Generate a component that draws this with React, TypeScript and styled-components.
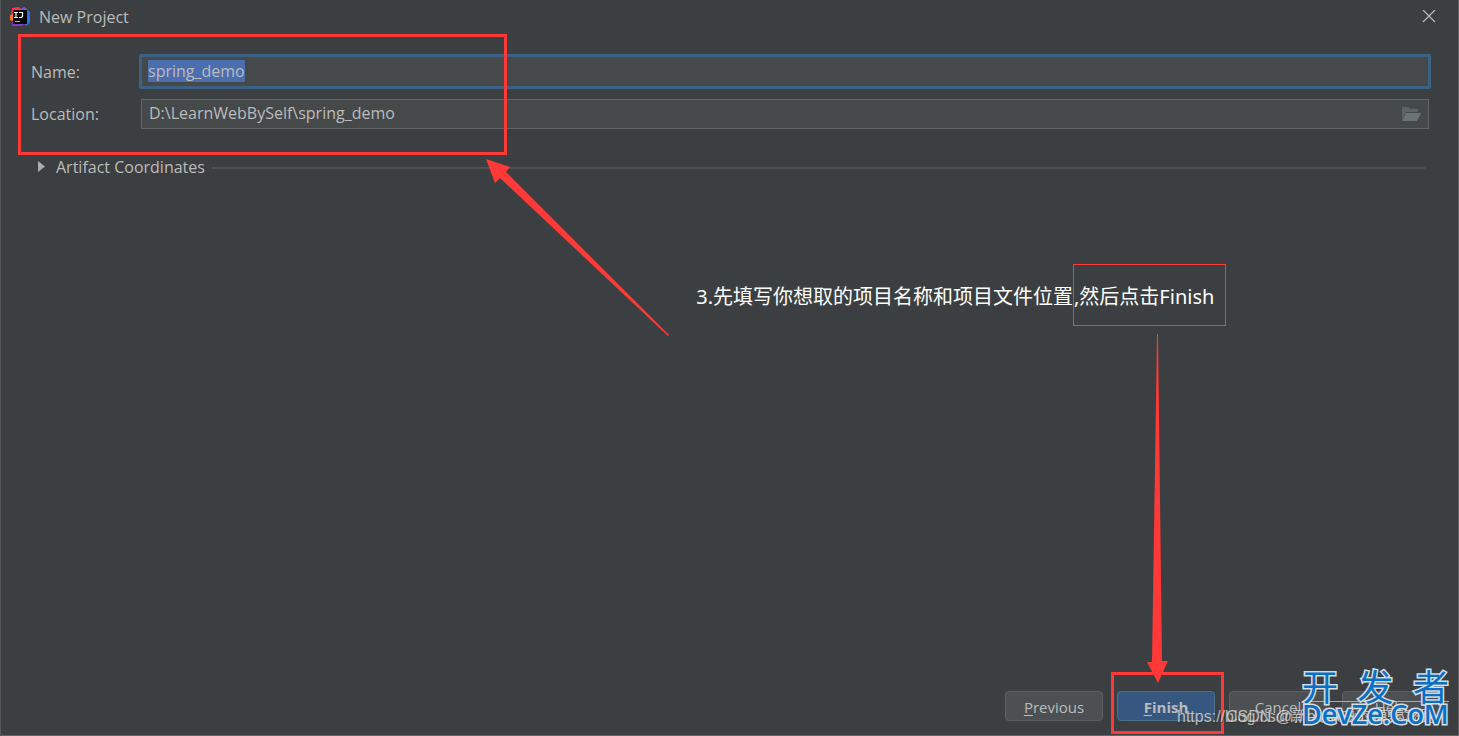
import React, { useEffect, useRef } from "react";
import styled, { createGlobalStyle } from "styled-components";

const uiFont = '"Open Sans", "Noto Sans CJK SC", sans-serif';
const red = "#ff3838";

const GlobalStyle = createGlobalStyle`
  *, *::before, *::after { box-sizing: border-box; }
  body { margin: 0; background: #3c3f41; }
`;

const Dialog = styled.main`
  position: relative;
  display: flex;
  flex-direction: column;
  min-height: 100vh;
  overflow: hidden;
  background: #3c3f41;
  border: 1px solid #626466;
  border-top: 0;
  border-left-color: #55585a;
  color: #bbbbbb;
  font: 16px/20px ${uiFont};
`;

const TitleBar = styled.header`
  display: flex;
  align-items: center;
  height: 34px;
  padding: 0 22px 0 8px;
`;

const Title = styled.h1`
  flex: 1;
  margin: 0 0 0 7px;
  font-size: 16px;
  font-weight: 400;
  line-height: 20px;
`;

const CloseButton = styled.button`
  display: flex;
  width: 14px;
  height: 14px;
  padding: 0;
  border: 0;
  background: none;
`;

const Fields = styled.section`
  position: relative;
  display: grid;
  gap: 10px;
  padding: 20px 27px 26px 30px;
`;

const Field = styled.div`
  display: grid;
  grid-template-columns: 108px 1fr;
  align-items: center;
`;

const FieldLabel = styled.label`
  line-height: 20px;
`;

const FocusedInput = styled.input`
  width: 100%;
  height: 35px;
  padding: 0 6px 2px;
  border: 3px solid #3d6185;
  border-radius: 2px;
  outline: 0;
  background: #45494a;
  color: #bbbbbb;
  font: 16px/20px ${uiFont};
  &::selection { background: #4b6eaf; color: #bbbbbb; }
`;

const PathBox = styled.div`
  display: flex;
  align-items: center;
  height: 30px;
  margin: 0 2px;
  padding-right: 7px;
  border: 1px solid #646464;
  background: #45494a;
`;

const PathInput = styled.input`
  flex: 1;
  min-width: 0;
  height: 28px;
  padding: 0 7px 2px;
  border: 0;
  outline: 0;
  background: none;
  color: #bbbbbb;
  font: 16px/20px ${uiFont};
`;

const BrowseButton = styled.button`
  display: flex;
  padding: 0;
  border: 0;
  background: none;
`;

const Artifact = styled.section`
  display: flex;
  align-items: center;
  gap: 7px;
  margin-top: 2px;
  padding: 0 33px 0 36px;
  &::after {
    content: "";
    flex: 1;
    height: 2px;
    margin-top: 2px;
    background: #515151;
  }
`;

const ArtifactToggle = styled.button`
  display: flex;
  align-items: center;
  gap: 10px;
  padding: 0;
  border: 0;
  background: none;
  color: #bbbbbb;
  font: 16px/20px ${uiFont};
`;

const Footer = styled.footer`
  display: flex;
  justify-content: flex-end;
  gap: 15px;
  margin-top: auto;
  padding: 0 18px 14px;
`;

const ActionButton = styled.button<{ $primary?: boolean }>`
  width: 98px;
  height: 30px;
  padding: 2px 0 0;
  border: 1px solid ${(p) => (p.$primary ? "#4c708c" : "#5e6060")};
  border-radius: 4px;
  background: ${(p) => (p.$primary ? "#365880" : "#4c5052")};
  color: #bbbbbb;
  font: ${(p) => (p.$primary ? 700 : 400)} 15px/20px ${uiFont};
  & u { text-underline-offset: 2px; }
`;

const Marked = styled.div`
  position: relative;
  margin: 0 -1px 0 -1px;
`;

const FieldsMark = styled.div`
  position: absolute;
  inset: 0 auto 0 17px;
  width: 489px;
  border: 3px solid ${red};
  pointer-events: none;
`;

const FinishMark = styled.div`
  position: absolute;
  inset: -19px -9px -13px -6px;
  border: 3px solid ${red};
  pointer-events: none;
`;

const FieldsArrow = styled.svg`
  position: absolute;
  left: 485px;
  top: 158px;
  pointer-events: none;
`;

const FinishArrow = styled.svg`
  position: absolute;
  right: 288px;
  bottom: 51px;
  pointer-events: none;
`;

const Instruction = styled.p`
  position: absolute;
  top: 264px;
  right: 232px;
  display: flex;
  align-items: center;
  margin: 0;
  color: #ffffff;
  font: 20px/28px "Noto Sans", "Noto Sans CJK SC", sans-serif;
  white-space: nowrap;
`;

const InstructionText = styled.span`
  padding-top: 4px;
`;

const InstructionMark = styled.span`
  display: flex;
  align-items: center;
  width: 153px;
  height: 62px;
  padding-top: 4px;
  border: 1px solid ${red};
`;

const BlogMark = styled.span<{ $width: number }>`
  position: absolute;
  right: 12px;
  bottom: 7px;
  width: ${(p) => p.$width}px;
  color: rgba(225, 225, 225, 0.75);
  font: 16px/22px "Liberation Sans", "Noto Sans CJK SC", sans-serif;
  white-space: nowrap;
  text-shadow: 1px 1px 1px #33333399;
  pointer-events: none;
`;

const SiteMark = styled.div`
  position: absolute;
  right: 9px;
  bottom: 3px;
  width: 147px;
  color: #0b70c5;
  -webkit-text-stroke: 3px #d3dde6;
  paint-order: stroke fill;
  pointer-events: none;
`;

const SiteMarkTop = styled.div`
  display: flex;
  justify-content: space-between;
  border-bottom: 1px solid #78b8dc;
  font: 400 36px/32px "Noto Sans CJK SC", sans-serif;
`;

const SiteMarkBottom = styled.div`
  height: 30px;
  font: 600 27px/24px "Open Sans", sans-serif;
  white-space: nowrap;
`;

function IdeaLogo() {
  return (
    <svg width="23" height="22" viewBox="0 0 23 22" aria-hidden="true">
      <path d="M3 2 10 1 14 6 5 17 2 12Z" fill="#fe315d" />
      <path d="M1 9 5 8 8 17 1 14Z" fill="#f97a12" />
      <path d="M12 3 15 1 21 6 21 17 17 20 9 12Z" fill="#2871e8" />
      <path d="M12 3 15 1 18 3 16 8Z" fill="#7556d8" />
      <path d="M3 16 12 12 16 18 13 20 3 20Z" fill="#8b34cb" />
      <path d="M4 4H18V18H4Z" fill="#050505" />
      <path d="M5 6.5H9M7 6.5V11.5M5 11.5H9M10 6.5H13.5V10.5L12.5 11.5H10" fill="none" stroke="#fff" strokeWidth="1.2" />
      <path d="M6 15.5H11" stroke="#aaa" strokeWidth="1.2" />
    </svg>
  );
}

export default function App() {
  const nameRef = useRef<HTMLInputElement>(null);

  useEffect(() => {
    nameRef.current?.focus();
    nameRef.current?.select();
  }, []);

  return (
    <>
      <GlobalStyle />
      <Dialog>
        <TitleBar>
          <IdeaLogo />
          <Title>New Project</Title>
          <CloseButton aria-label="Close">
            <svg width="14" height="14" viewBox="0 0 14 14">
              <path d="M1 0 13 12M13 0 1 12" stroke="#bbbbbb" strokeWidth="1.2" />
            </svg>
          </CloseButton>
        </TitleBar>

        <Fields>
          <Field>
            <FieldLabel htmlFor="name">Name:</FieldLabel>
            <FocusedInput id="name" ref={nameRef} defaultValue="spring_demo" spellCheck={false} />
          </Field>
          <Field>
            <FieldLabel htmlFor="location">Location:</FieldLabel>
            <PathBox>
              <PathInput id="location" defaultValue="D:\LearnWebBySelf\spring_demo" spellCheck={false} />
              <BrowseButton aria-label="Browse">
                <svg width="20" height="16" viewBox="0 0 20 16">
                  <path d="M1 14V1H7L9 3H17V6H5Z" fill="#5c6467" />
                  <path d="M5 7H20L16 15H1Z" fill="#6a7375" />
                </svg>
              </BrowseButton>
            </PathBox>
          </Field>
          <FieldsMark />
        </Fields>

        <Artifact>
          <ArtifactToggle aria-expanded={false}>
            <svg width="9" height="12" viewBox="0 0 9 12">
              <path d="M1 0 8 5.5 1 11Z" fill="#adadad" />
            </svg>
            Artifact Coordinates
          </ArtifactToggle>
        </Artifact>

        <Footer>
          <ActionButton><u>P</u>revious</ActionButton>
          <Marked>
            <ActionButton $primary><u>F</u>inish</ActionButton>
            <FinishMark />
          </Marked>
          <ActionButton>Cancel</ActionButton>
          <ActionButton>Help</ActionButton>
        </Footer>

        <Instruction>
          <InstructionText>3.先填写你想取的项目名称和项目文件位置</InstructionText>
          <InstructionMark>,然后点击Finish</InstructionMark>
        </Instruction>

        <FieldsArrow width="186" height="180" viewBox="0 0 186 180" aria-hidden="true">
          <path d="M0 1 24 9 20 14 183 177 182 178 14 20 9 25Z" fill={red} />
        </FieldsArrow>
        <FinishArrow width="24" height="350" viewBox="0 0 24 350" aria-hidden="true">
          <path d="M11 0H12L16 327H22L12 349 1 328H6Z" fill={red} />
        </FinishArrow>

        <BlogMark $width={269}>https://blog.csdn.net/weixin_456789</BlogMark>
        <BlogMark $width={220}>CSDN @新人小白的摸索之路</BlogMark>
        <SiteMark>
          <SiteMarkTop>
            <span>开</span>
            <span>发</span>
            <span>者</span>
          </SiteMarkTop>
          <SiteMarkBottom>DevZe.CoM</SiteMarkBottom>
        </SiteMark>
      </Dialog>
    </>
  );
}
